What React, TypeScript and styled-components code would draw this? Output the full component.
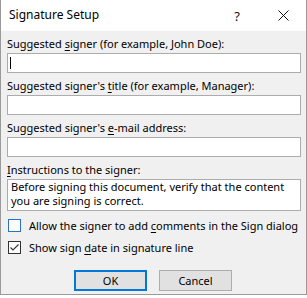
import React from 'react';
import styled, { createGlobalStyle } from 'styled-components';

const GlobalStyle = createGlobalStyle`
	html, body {
		margin: 0;
		padding: 0;
		background: #ffffff;
	}
	body {
		font-family: 'Noto Sans', 'Liberation Sans', sans-serif;
		font-size: 11px;
		color: #000000;
	}
`;

const Window = styled.div`
	width: 307px;
	height: 295px;
	box-sizing: border-box;
	border: 1px solid #9a9a9a;
	border-top: none;
	display: flex;
	flex-direction: column;
	background: #f0f0f0;
`;

const TitleBar = styled.div`
	height: 31px;
	background: #ffffff;
	display: flex;
	align-items: center;
	padding-left: 8px;
	font-size: 12px;
`;

const Title = styled.div`
	flex: 1;
	padding-bottom: 2px;
`;

const TitleButton = styled.div`
	width: 46px;
	height: 31px;
	display: flex;
	align-items: center;
	justify-content: center;
	font-size: 13px;
	color: #111;
`;

const Body = styled.div`
	padding: 5px 5px 0 6px;
	display: flex;
	flex-direction: column;
`;

const Label = styled.div`
	line-height: 16px;
	height: 16px;
	margin-bottom: 1px;
	white-space: nowrap;
`;

const Key = styled.span`
	text-decoration: underline;
	text-underline-offset: 2px;
`;

const Input = styled.div`
	height: 20px;
	box-sizing: border-box;
	border: 1px solid #acacac;
	background: #ffffff;
	margin-bottom: 5px;
	display: flex;
	align-items: center;
	padding-left: 2px;
`;

const Caret = styled.div`
	width: 1px;
	height: 12px;
	background: #000;
`;

const TextArea = styled.div`
	height: 32px;
	box-sizing: border-box;
	border: 1px solid #acacac;
	background: #ffffff;
	padding: 0 0 0 3px;
	line-height: 14px;
	margin-bottom: 8px;
`;

const CheckRow = styled.label`
	display: flex;
	align-items: center;
	height: 13px;
	gap: 8px;
	margin-bottom: 9px;
	white-space: nowrap;
	padding-left: 1px;
`;

const Box = styled.div<{ $focus?: boolean }>`
	flex-shrink: 0;
	width: 13px;
	height: 13px;
	box-sizing: border-box;
	border: 1px solid ${p => (p.$focus ? '#2a72c8' : '#333333')};
	background: #ffffff;
	display: flex;
	align-items: center;
	justify-content: center;
`;

const Buttons = styled.div`
	display: flex;
	justify-content: center;
	gap: 12px;
	margin-top: 7px;
	padding-right: 2px;
`;

const Button = styled.div<{ $primary?: boolean }>`
	width: 73px;
	height: 21px;
	box-sizing: border-box;
	background: #e1e1e1;
	border: ${p => (p.$primary ? '2px solid #0078d7' : '1px solid #adadad')};
	display: flex;
	align-items: center;
	justify-content: center;
	padding-bottom: 1px;
`;

function CloseIcon() {
	return (
		<svg width="11" height="11" viewBox="0 0 11 11">
			<path d="M0.5 0.5 L10.5 10.5 M10.5 0.5 L0.5 10.5" stroke="#111" strokeWidth="1" />
		</svg>
	);
}

function Check() {
	return (
		<svg width="11" height="11" viewBox="0 0 11 11">
			<path d="M1.5 5.5 L4 8 L9.5 2.5" stroke="#333" strokeWidth="1.1" fill="none" />
		</svg>
	);
}

export default function App() {
	return (
		<>
			<GlobalStyle />
			<Window>
				<TitleBar>
					<Title>Signature Setup</Title>
					<TitleButton>?</TitleButton>
					<TitleButton><CloseIcon /></TitleButton>
				</TitleBar>
				<Body>
					<Label>Suggested <Key>s</Key>igner (for example, John Doe):</Label>
					<Input><Caret /></Input>
					<Label>Suggested signer's <Key>t</Key>itle (for example, Manager):</Label>
					<Input />
					<Label>Suggested signer's <Key>e</Key>-mail address:</Label>
					<Input />
					<Label><Key>I</Key>nstructions to the signer:</Label>
					<TextArea>
						Before signing this document, verify that the content you are signing is correct.
					</TextArea>
					<CheckRow>
						<Box $focus />
						<span>Allow the signer to add <Key>c</Key>omments in the Sign dialog</span>
					</CheckRow>
					<CheckRow>
						<Box><Check /></Box>
						<span>Show sign <Key>d</Key>ate in signature line</span>
					</CheckRow>
					<Buttons>
						<Button $primary>OK</Button>
						<Button>Cancel</Button>
					</Buttons>
				</Body>
			</Window>
		</>
	);
}
